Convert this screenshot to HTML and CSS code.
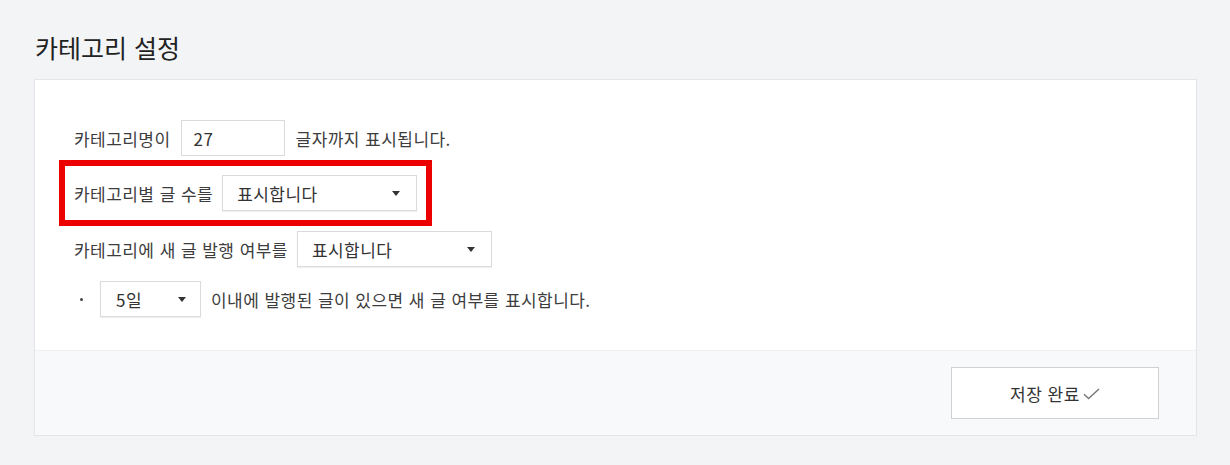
FILE: index.html
```html
<!DOCTYPE html>
<html lang="ko">
<head>
<meta charset="utf-8">
<link rel="stylesheet" href="styles.css">
</head>
<body>
<div class="page">
  <h2 class="title">카테고리 설정</h2>
  <div class="card">
    <div class="card-body">
      <div class="row">
        <span class="label">카테고리명이</span>
        <div class="input">27</div>
        <span class="label">글자까지 표시됩니다.</span>
      </div>
      <div class="row row-highlight">
        <span class="label">카테고리별 글 수를</span>
        <div class="select select-wide"><span>표시합니다</span><span class="caret"></span></div>
      </div>
      <div class="row row-third">
        <span class="label">카테고리에 새 글 발행 여부를</span>
        <div class="select select-wide"><span>표시합니다</span><span class="caret"></span></div>
      </div>
      <div class="row row-bullet">
        <span class="bullet"></span>
        <div class="select select-small"><span>5일</span><span class="caret"></span></div>
        <span class="label">이내에 발행된 글이 있으면 새 글 여부를 표시합니다.</span>
      </div>
    </div>
    <div class="card-footer">
      <button class="save-btn" type="button">저장 완료<svg class="check" width="17" height="12" viewBox="0 0 17 12"><path d="M1 6.2 L5.6 10.6 L16 1" fill="none" stroke="#777" stroke-width="1.4"/></svg></button>
    </div>
  </div>
</div>
</body>
</html>
```
FILE: styles.css
```css
* { box-sizing: border-box; }
html, body {
  margin: 0;
  padding: 0;
  background: #f3f4f6;
  font-family: "Noto Sans CJK KR", "Noto Sans", sans-serif;
  color: #333;
}
.page {
  padding: 29px 33px 0 34px;
}
.title {
  margin: 0 0 14px 1px;
  font-size: 25px;
  font-weight: 400;
  line-height: 36px;
  color: #222;
}
.card {
  background: #fff;
  border: 1px solid #e3e5e9;
}
.card-body {
  padding: 40px 38px 33px 39px;
}
.row {
  display: flex;
  align-items: center;
  height: 36px;
  font-size: 17px;
  letter-spacing: 0.45px;
}
.row + .row { margin-top: 19px; }
.row-third { margin-top: 20px !important; }
.row-bullet { margin-top: 14px !important; }
.label {
  color: #3d3d3d;
  white-space: nowrap;
}
.input {
  width: 104px;
  height: 36px;
  margin: 0 11px 0 10px;
  border: 1px solid #d9dbde;
  padding: 0 12px;
  display: flex;
  align-items: center;
  color: #333;
}
.row-highlight {
  width: fit-content;
  outline: 6px solid #ec0000;
  outline-offset: 9px;
}
.select {
  height: 36px;
  border: 1px solid #d9dbde;
  box-shadow: 0 1px 1px rgba(0,0,0,0.06);
  display: flex;
  align-items: center;
  justify-content: space-between;
  padding: 0 16px 0 14px;
  margin-left: 9px;
  color: #333;
  background: #fff;
}
.select-wide { width: 195px; }
.select-small {
  width: 101px;
  margin-left: 0;
  margin-right: 10px;
  padding-left: 15px;
  padding-right: 14px;
}
.caret {
  width: 0;
  height: 0;
  border-left: 4px solid transparent;
  border-right: 4px solid transparent;
  border-top: 5px solid #333;
}
.bullet {
  width: 3px;
  height: 3px;
  border-radius: 50%;
  background: #444;
  margin: 0 17px 0 6px;
}
.card-footer {
  background: #f8f9fb;
  border-top: 1px solid #eef0f2;
  padding: 16px 37px 16px 0;
  display: flex;
  justify-content: flex-end;
}
.save-btn {
  width: 208px;
  height: 52px;
  background: #fff;
  border: 1px solid #cfd1d5;
  font-family: inherit;
  font-size: 17px;
  letter-spacing: 0.5px;
  color: #333;
  display: flex;
  align-items: center;
  justify-content: center;
  gap: 3px;
  cursor: pointer;
}
.check { margin-top: 2px; }
```
